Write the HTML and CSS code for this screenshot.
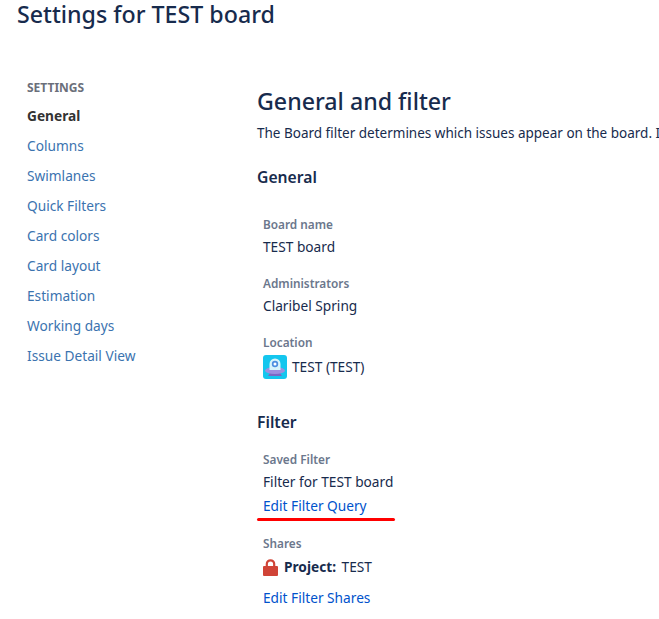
FILE: index.html
```html
<!DOCTYPE html>
<html>

<head>
  <title>Settings for TEST board</title>
  <link rel="stylesheet" href="styles.css">
</head>

<body>
  <h1 class="page-title">Settings for TEST board</h1>
  <div class="page-body">
    <div class="side-nav">
      <div class="side-heading">SETTINGS</div>
      <a class="side-link side-active" href="#">General</a>
      <a class="side-link" href="#">Columns</a>
      <a class="side-link" href="#">Swimlanes</a>
      <a class="side-link" href="#">Quick Filters</a>
      <a class="side-link" href="#">Card colors</a>
      <a class="side-link" href="#">Card layout</a>
      <a class="side-link" href="#">Estimation</a>
      <a class="side-link" href="#">Working days</a>
      <a class="side-link" href="#">Issue Detail View</a>
    </div>
    <div class="content">
      <h2 class="content-title">General and filter</h2>
      <p class="content-intro">The Board filter determines which issues appear on the board. It</p>

      <h3 class="section-title">General</h3>
      <div class="fields fields-general">
        <div class="field">
          <div class="field-label">Board name</div>
          <div class="field-value">TEST board</div>
        </div>
        <div class="field">
          <div class="field-label">Administrators</div>
          <div class="field-value">Claribel Spring</div>
        </div>
        <div class="field">
          <div class="field-label">Location</div>
          <div class="field-value field-icon-row">
            <svg class="project-icon" viewBox="0 0 24 24">
              <rect width="24" height="24" rx="3" fill="#14c6ee" />
              <path d="M5 21l2-3h10l2 3z" fill="#7a68c4" />
              <ellipse cx="12" cy="15.5" rx="10" ry="3.6" fill="#9d8fe0" />
              <path d="M6.5 15V9a5.5 5.5 0 0 1 11 0v6z" fill="#d8f4fb" />
              <circle cx="12" cy="9" r="3.2" fill="#4d8fe0" />
              <circle cx="12" cy="9" r="1.5" fill="#fff" />
            </svg>
            <span>TEST (TEST)</span>
          </div>
        </div>
      </div>

      <h3 class="section-title section-filter">Filter</h3>
      <div class="fields">
        <div class="field">
          <div class="field-label">Saved Filter</div>
          <div class="field-value">Filter for TEST board</div>
          <a class="field-link edit-query" href="#">Edit Filter Query</a>
        </div>
        <div class="field field-shares">
          <div class="field-label">Shares</div>
          <div class="field-value field-icon-row">
            <svg class="lock-icon" viewBox="0 0 15 17">
              <path d="M3.8 8V5a3.7 3.7 0 0 1 7.4 0V8" fill="none" stroke="#d04437" stroke-width="2.2" />
              <rect x="0" y="7" width="15" height="10" rx="1" fill="#d04437" />
            </svg>
            <span><b class="share-type">Project:</b> TEST</span>
          </div>
          <a class="field-link edit-shares" href="#">Edit Filter Shares</a>
        </div>
      </div>
    </div>
  </div>
</body>

</html>
```

FILE: styles.css
```css
html, body {
  height: 100%;
  overflow: hidden;
}

body {
  margin: 0;
  font-family: "Noto Sans", sans-serif;
  font-size: 13.7px;
  line-height: 20px;
  color: #172b4d;
  background-color: #fff;
}

a {
  text-decoration: none;
}

.page-title {
  margin: 0;
  padding: 0 0 0 17px;
  height: 29px;
  font-size: 23.2px;
  line-height: 28px;
  font-weight: 500;
  white-space: nowrap;
}

.page-body {
  display: flex;
  padding: 49px 0 0 27px;
}

.side-nav {
  display: flex;
  flex-direction: column;
  width: 230px;
  flex-shrink: 0;
}

.side-heading {
  margin-bottom: 8px;
  font-size: 12px;
  line-height: 20px;
  font-weight: 700;
  color: #6b6f7a;
}

.side-link {
  height: 30px;
  line-height: 20px;
  color: #3b73af;
}

.side-active {
  font-weight: 700;
  color: #333;
}

.content {
  padding-top: 8px;
  white-space: nowrap;
}

.content-title {
  margin: 0;
  font-size: 23.2px;
  line-height: 30px;
  font-weight: 500;
}

.content-intro {
  margin: 7px 0 0;
  font-size: 13.5px;
}

.section-title {
  margin: 24px 0 0;
  font-size: 15.7px;
  line-height: 20px;
  font-weight: 600;
}

.section-filter {
  margin-top: 33px;
}

.fields {
  padding-left: 6px;
}

.fields-general {
  margin-top: 29px;
}

.section-filter + .fields {
  margin-top: 19px;
}

.field + .field {
  margin-top: 18px;
}

.field-label {
  font-size: 11.8px;
  line-height: 16px;
  font-weight: 600;
  color: #6b778c;
}

.field-value {
  margin-top: 5px;
  line-height: 20px;
}

.field-icon-row {
  display: flex;
  align-items: center;
  gap: 5px;
}

.project-icon {
  width: 24px;
  height: 24px;
}

.lock-icon {
  width: 15px;
  height: 17px;
  margin-right: 1px;
}

.share-type {
  margin-right: 2px;
}

.field-link {
  display: block;
  color: #0052cc;
}

.edit-query {
  position: relative;
  margin-top: 4px;
}

/* red marker drawn over the screenshot */
.edit-query::after {
  content: "";
  position: absolute;
  left: -6px;
  top: 22px;
  width: 138px;
  height: 3px;
  border-radius: 2px;
  background-color: #f00;
}

.field + .field-shares {
  margin-top: 19px;
}

.field-shares .field-value {
  margin-top: 6px;
}

.edit-shares {
  margin-top: 11px;
}
```
